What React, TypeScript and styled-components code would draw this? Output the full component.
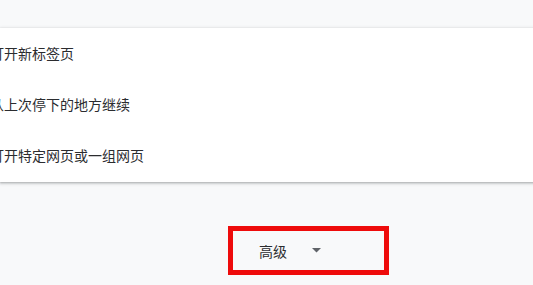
import styled, { createGlobalStyle } from "styled-components";

const GlobalStyle = createGlobalStyle`
  html, body {
    margin: 0;
    padding: 0;
    background: #f8f9fa;
    overflow: hidden;
  }
  body {
    font-family: "Noto Sans CJK SC", "Liberation Sans", sans-serif;
  }
`;

const Page = styled.div`
  width: 533px;
  height: 285px;
  padding-top: 28px;
  box-sizing: border-box;
  display: flex;
  flex-direction: column;
`;

const Card = styled.div`
  background: #ffffff;
  box-shadow: 0 1px 2px rgba(60, 64, 67, 0.3), 0 1px 3px 1px rgba(60, 64, 67, 0.15);
  display: flex;
  flex-direction: column;
  padding-bottom: 1px;
  margin-right: -4px;
`;

const OptionRow = styled.div`
  height: 51px;
  display: flex;
  align-items: center;
  padding-bottom: 1px;
  box-sizing: border-box;
`;

const OptionLabel = styled.span`
  margin-left: -10px;
  font-size: 14px;
  color: #2b2c2f;
  white-space: nowrap;
`;

const Footer = styled.div`
  display: flex;
  padding-left: 228px;
  margin-top: 44px;
`;

const Highlight = styled.div`
  width: 161px;
  height: 49px;
  box-sizing: border-box;
  border: 5px solid #ee0b0b;
  display: flex;
  align-items: center;
  padding-left: 26px;
`;

const AdvancedButton = styled.button`
  border: none;
  background: transparent;
  padding: 0;
  display: flex;
  align-items: center;
  gap: 25px;
  font-family: inherit;
  font-size: 14px;
  color: #2b2c2f;
  cursor: pointer;
`;

const Caret = () => (
  <svg width="9" height="5" viewBox="0 0 9 5">
    <path d="M0 0 L9 0 L4.5 4.5 Z" fill="#5f6368" />
  </svg>
);

const options = ["打开新标签页", "从上次停下的地方继续", "打开特定网页或一组网页"];

export default function App() {
  return (
    <>
      <GlobalStyle />
      <Page>
        <Card>
          {options.map((label) => (
            <OptionRow key={label}>
              <OptionLabel>{label}</OptionLabel>
            </OptionRow>
          ))}
        </Card>
        <Footer>
          <Highlight>
            <AdvancedButton>
              高级
              <Caret />
            </AdvancedButton>
          </Highlight>
        </Footer>
      </Page>
    </>
  );
}
